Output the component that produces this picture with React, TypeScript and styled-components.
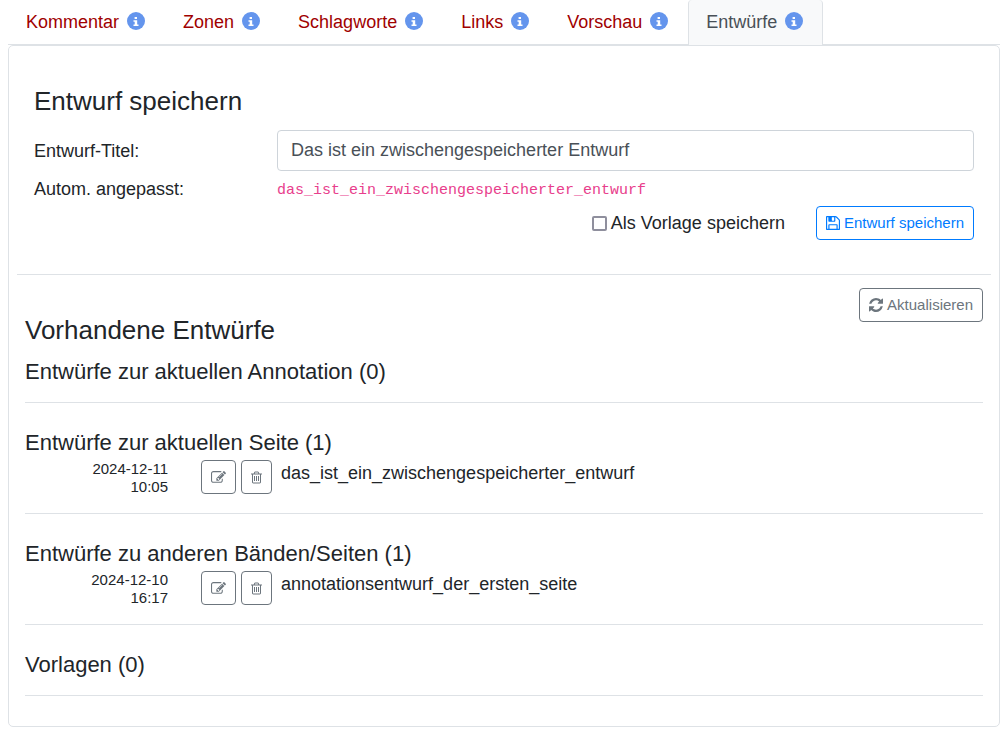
import React, { useState } from "react";
import styled, { createGlobalStyle, css } from "styled-components";

const GlobalStyle = createGlobalStyle`
  *, *::before, *::after { box-sizing: border-box; }
  body {
    margin: 0;
    background: #fff;
    color: #212529;
    font-family: "Liberation Sans", Arial, sans-serif;
    font-size: 18px;
    line-height: 26px;
  }
  h2, h3, ul, p { margin: 0; padding: 0; font-weight: 400; }
`;

const Page = styled.main`
  padding: 0 5px 4px 8px;
`;

const Tabs = styled.nav`
  display: flex;
  height: 45px;
  border-bottom: 1px solid #dee2e6;
`;

const Tab = styled.a<{ $active?: boolean }>`
  display: flex;
  align-items: center;
  gap: 8px;
  height: 45px;
  padding: 0 19px 2px 17px;
  border: 1px solid transparent;
  border-width: 0 1px;
  border-radius: 4px 4px 0 0;
  color: #a00000;
  text-decoration: none;
  ${({ $active }) =>
    $active &&
    css`
      color: #495057;
      background: #f8f9fa;
      border-color: #dee2e6;
    `}
`;

const Card = styled.section`
  padding: 0 8px 30px;
  border: 1px solid #dee2e6;
  border-radius: 5px;
`;

const Form = styled.form`
  padding: 40px 17px 34px;
  border-bottom: 1px solid #dee2e6;
`;

const Title = styled.h2`
  font-size: 26px;
  line-height: 31px;
`;

const Subtitle = styled.h3`
  font-size: 22px;
  line-height: 26px;
`;

const Field = styled.div`
  display: grid;
  grid-template-columns: minmax(0, 243fr) minmax(0, 697fr);
  align-items: center;
  margin-top: 5px;
`;

const Fields = styled.div`
  margin: 13px 0 4px;
  & > ${Field}:first-child { margin-top: 0; }
`;

const TextInput = styled.input`
  width: 100%;
  height: 41px;
  padding: 0 13px;
  border: 1px solid #ced4da;
  border-radius: 4px;
  background: #fff;
  color: #495057;
  font: inherit;
`;

const Slug = styled.code`
  padding-top: 3px;
  color: #e83e8c;
  font-family: "Liberation Mono", monospace;
  font-size: 15px;
  line-height: 23px;
`;

const Actions = styled.div`
  display: flex;
  justify-content: flex-end;
  align-items: center;
  gap: 31px;
`;

const CheckLabel = styled.label`
  display: flex;
  align-items: center;
  gap: 4px;
`;

const Checkbox = styled.input`
  appearance: none;
  width: 15px;
  height: 15px;
  margin: 0;
  border: 2px solid #8f8f9d;
  border-radius: 2px;
  background: #fff;
  &:checked { background: #007bff; }
`;

const Button = styled.button<{ $primary?: boolean }>`
  display: inline-flex;
  align-items: center;
  gap: 4px;
  height: 34px;
  padding: 0 9px;
  border: 1px solid currentColor;
  border-radius: 4px;
  background: transparent;
  color: ${({ $primary }) => ($primary ? "#007bff" : "#6c757d")};
  font: inherit;
  font-size: 15px;
  cursor: pointer;
`;

const Drafts = styled.div`
  padding: 13px 8px 0;
`;

const DraftsHeader = styled.header`
  display: flex;
  justify-content: space-between;
  align-items: flex-start;
  margin-bottom: 13px;
  ${Title} { padding-top: 27px; }
`;

const Group = styled.section`
  padding-bottom: 17px;
  border-bottom: 1px solid #dee2e6;
  & + & { padding-top: 27px; }
`;

const DraftList = styled.ul`
  list-style: none;
`;

const DraftRow = styled.li`
  display: grid;
  grid-template-columns: 143px auto 1fr;
  margin-top: 4px;
`;

const DraftDate = styled.time`
  padding-left: 64px;
  font-size: 15px;
  line-height: 18px;
  text-align: right;
`;

const RowButtons = styled.div`
  display: flex;
  gap: 5px;
  margin: 0 9px 0 33px;
`;

const paths = {
  info: "M1.6 0h2.4v2h-2.4zM.5 3.2h3.7v4.3h1.3v1.5h-5v-1.5h1.2v-2.8h-1.2z",
  refresh: "M1639 1056q0 5-1 7-64 268-268 434.5t-478 166.5q-146 0-282.5-55t-243.5-157l-129 129q-19 19-45 19t-45-19-19-45v-448q0-26 19-45t45-19h448q26 0 45 19t19 45-19 45l-137 137q71 66 161 102t187 36q134 0 250-65t186-179q11-17 53-117 8-23 30-23h192q13 0 22.5 9.5t9.5 22.5zm25-800v448q0 26-19 45t-45 19h-448q-26 0-45-19t-19-45 19-45l138-138q-148-137-349-137-134 0-250 65t-186 179q-11 17-53 117-8 23-30 23h-199q-13 0-22.5-9.5t-9.5-22.5v-7q65-268 270-434.5t480-166.5q146 0 284 55.5t245 156.5l130-129q19-19 45-19t45 19 19 45z",
  edit: "M888 1184l116-116-152-152-116 116v56h96v96h56zm440-720q-16-16-33 1l-350 350q-17 17-1 33t33-1l350-350q17-17 1-33zm80 594v190q0 119-84.5 203.5t-203.5 84.5h-832q-119 0-203.5-84.5t-84.5-203.5v-832q0-119 84.5-203.5t203.5-84.5h832q63 0 117 25 15 7 18 23 3 17-9 29l-49 49q-14 14-32 8-23-6-45-6h-832q-66 0-113 47t-47 113v832q0 66 47 113t113 47h832q66 0 113-47t47-113v-126q0-13 9-22l64-64q15-15 35-7t20 29zm-96-738l288 288-672 672h-288v-288zm444 132l-92 92-288-288 92-92q28-28 68-28t68 28l152 152q28 28 28 68t-28 68z",
  trash: "M704 736v576q0 14-9 23t-23 9h-64q-14 0-23-9t-9-23v-576q0-14 9-23t23-9h64q14 0 23 9t9 23zm256 0v576q0 14-9 23t-23 9h-64q-14 0-23-9t-9-23v-576q0-14 9-23t23-9h64q14 0 23 9t9 23zm256 0v576q0 14-9 23t-23 9h-64q-14 0-23-9t-9-23v-576q0-14 9-23t23-9h64q14 0 23 9t9 23zm128 724v-948h-896v948q0 22 7 40.5t14.5 27 10.5 8.5h832q3 0 10.5-8.5t14.5-27 7-40.5zm-672-1076h448l-48-117q-7-9-17-11h-317q-10 2-17 11zm928 32v64q0 14-9 23t-23 9h-96v948q0 83-47 143.5t-113 60.5h-832q-66 0-113-58.5t-47-141.5v-952h-96q-14 0-23-9t-9-23v-64q0-14 9-23t23-9h309l70-167q15-37 54-63t79-26h320q40 0 79 26t54 63l70 167h309q14 0 23 9t9 23z",
  save: "M512 1536h768v-384h-768v384zm896 0h128v-896q0-14-10-38.5t-20-34.5l-281-281q-10-10-34-20t-39-10v416q0 40-28 68t-68 28h-576q-40 0-68-28t-28-68v-416h-128v1280h128v-416q0-40 28-68t68-28h832q40 0 68 28t28 68v416zm-384-928v-320q0-13-9.5-22.5t-22.5-9.5h-192q-13 0-22.5 9.5t-9.5 22.5v320q0 13 9.5 22.5t22.5 9.5h192q13 0 22.5-9.5t9.5-22.5zm640 32v928q0 40-28 68t-68 28h-1344q-40 0-68-28t-28-68v-1344q0-40 28-68t68-28h928q40 0 88 20t76 48l280 280q28 28 48 76t20 88z",
};

const boxes: Record<keyof typeof paths, string> = {
  info: "0 0 6 9",
  refresh: "128 128 1536 1536",
  edit: "0 128 1792 1536",
  trash: "192 128 1408 1536",
  save: "128 128 1536 1536",
};

const Svg = styled.svg<{ $w: number; $h: number }>`
  display: block;
  flex: none;
  width: ${({ $w }) => $w}px;
  height: ${({ $h }) => $h}px;
  fill: currentColor;
`;

const InfoBadge = styled.span`
  display: flex;
  align-items: center;
  justify-content: center;
  width: 18px;
  height: 18px;
  margin-bottom: 1px;
  border-radius: 50%;
  background: #6495ed;
  color: #fff;
`;

function Icon({ name, w = 14, h = 14 }: { name: keyof typeof paths; w?: number; h?: number }) {
  return (
    <Svg $w={w} $h={h} viewBox={boxes[name]} aria-hidden="true">
      <path d={paths[name]} />
    </Svg>
  );
}

const tabs = ["Kommentar", "Zonen", "Schlagworte", "Links", "Vorschau", "Entwürfe"];

type Draft = { day: string; time: string; name: string };

const groups: { title: string; drafts: Draft[] }[] = [
  { title: "Entwürfe zur aktuellen Annotation", drafts: [] },
  {
    title: "Entwürfe zur aktuellen Seite",
    drafts: [{ day: "2024-12-11", time: "10:05", name: "das_ist_ein_zwischengespeicherter_entwurf" }],
  },
  {
    title: "Entwürfe zu anderen Bänden/Seiten",
    drafts: [{ day: "2024-12-10", time: "16:17", name: "annotationsentwurf_der_ersten_seite" }],
  },
  { title: "Vorlagen", drafts: [] },
];

export default function App() {
  const [title, setTitle] = useState("Das ist ein zwischengespeicherter Entwurf");
  const slug = title.trim().toLowerCase().replace(/\s+/g, "_");

  return (
    <>
      <GlobalStyle />
      <Page>
        <Tabs>
          {tabs.map((name) => (
            <Tab key={name} href="#" $active={name === "Entwürfe"}>
              {name}
              <InfoBadge>
                <Icon name="info" w={6} h={9} />
              </InfoBadge>
            </Tab>
          ))}
        </Tabs>
        <Card>
          <Form onSubmit={(e) => e.preventDefault()}>
            <Title>Entwurf speichern</Title>
            <Fields>
              <Field>
                <label htmlFor="draft-title">Entwurf-Titel:</label>
                <TextInput id="draft-title" value={title} onChange={(e) => setTitle(e.target.value)} />
              </Field>
              <Field>
                <span>Autom. angepasst:</span>
                <Slug>{slug}</Slug>
              </Field>
            </Fields>
            <Actions>
              <CheckLabel>
                <Checkbox type="checkbox" />
                Als Vorlage speichern
              </CheckLabel>
              <Button type="submit" $primary>
                <Icon name="save" />
                Entwurf speichern
              </Button>
            </Actions>
          </Form>
          <Drafts>
            <DraftsHeader>
              <Title>Vorhandene Entwürfe</Title>
              <Button type="button">
                <Icon name="refresh" />
                Aktualisieren
              </Button>
            </DraftsHeader>
            {groups.map(({ title: heading, drafts }) => (
              <Group key={heading}>
                <Subtitle>{`${heading} (${drafts.length})`}</Subtitle>
                {drafts.length > 0 && (
                  <DraftList>
                    {drafts.map((d) => (
                      <DraftRow key={d.name}>
                        <DraftDate>{`${d.day} ${d.time}`}</DraftDate>
                        <RowButtons>
                          <Button type="button" aria-label="Bearbeiten">
                            <Icon name="edit" w={15} h={13} />
                          </Button>
                          <Button type="button" aria-label="Löschen">
                            <Icon name="trash" w={11} h={13} />
                          </Button>
                        </RowButtons>
                        <span>{d.name}</span>
                      </DraftRow>
                    ))}
                  </DraftList>
                )}
              </Group>
            ))}
          </Drafts>
        </Card>
      </Page>
    </>
  );
}
